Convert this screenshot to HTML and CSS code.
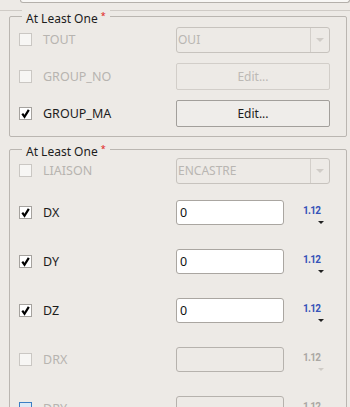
FILE: index.html
```html
<!DOCTYPE html>
<html lang="fr">
<head>
  <meta charset="UTF-8" />
  <title>Mot-clé</title>
  <link rel="stylesheet" href="styles.css">
</head>
<body>

<div class="top">
  <div class="top-field"></div>
</div>

<div class="panel">

  <div class="group group-first">
    <div class="group-head"><span class="group-title">At Least One <span class="req">*</span></span></div>

    <div class="row">
      <span class="check disabled"></span>
      <span class="label disabled">TOUT</span>
      <div class="combo disabled">
        <span class="combo-text">OUI</span>
        <span class="combo-arrow"><span class="tri"></span></span>
      </div>
    </div>

    <div class="row">
      <span class="check disabled"></span>
      <span class="label disabled">GROUP_NO</span>
      <button class="btn" disabled>Edit...</button>
    </div>

    <div class="row">
      <span class="check on"><svg viewBox="0 0 11 11"><path d="M2.3 5.6 L4.5 8.8 L8.8 1.8"/></svg></span>
      <span class="label">GROUP_MA</span>
      <button class="btn">Edit...</button>
    </div>
  </div>

  <div class="group group-second">
    <div class="group-head"><span class="group-title">At Least One <span class="req">*</span></span></div>

    <div class="row row-combo">
      <span class="check disabled"></span>
      <span class="label disabled">LIAISON</span>
      <div class="combo disabled">
        <span class="combo-text">ENCASTRE</span>
        <span class="combo-arrow"><span class="tri"></span></span>
      </div>
    </div>

    <div class="row row-spin">
      <span class="check on"><svg viewBox="0 0 11 11"><path d="M2.3 5.6 L4.5 8.8 L8.8 1.8"/></svg></span>
      <span class="label">DX</span>
      <div class="spin">
        <input class="field" type="text" value="0">
        <span class="ver"><span class="ver-num">1.12</span><span class="ver-tri"></span></span>
      </div>
    </div>

    <div class="row row-spin">
      <span class="check on"><svg viewBox="0 0 11 11"><path d="M2.3 5.6 L4.5 8.8 L8.8 1.8"/></svg></span>
      <span class="label">DY</span>
      <div class="spin">
        <input class="field" type="text" value="0">
        <span class="ver"><span class="ver-num">1.12</span><span class="ver-tri"></span></span>
      </div>
    </div>

    <div class="row row-spin">
      <span class="check on"><svg viewBox="0 0 11 11"><path d="M2.3 5.6 L4.5 8.8 L8.8 1.8"/></svg></span>
      <span class="label">DZ</span>
      <div class="spin">
        <input class="field" type="text" value="0">
        <span class="ver"><span class="ver-num">1.12</span><span class="ver-tri"></span></span>
      </div>
    </div>

    <div class="row row-spin">
      <span class="check disabled"></span>
      <span class="label disabled">DRX</span>
      <div class="spin">
        <input class="field" type="text" value="" disabled>
        <span class="ver off"><span class="ver-num">1.12</span><span class="ver-tri"></span></span>
      </div>
    </div>

    <div class="row row-spin">
      <span class="check focus"></span>
      <span class="label disabled">DRY</span>
      <div class="spin">
        <input class="field" type="text" value="" disabled>
        <span class="ver off"><span class="ver-num">1.12</span><span class="ver-tri"></span></span>
      </div>
    </div>
  </div>

</div>

</body>
</html>
```

FILE: styles.css
```css
body {
  margin: 0;
  background-color: #edeae6;
  font-family: "Noto Sans", sans-serif;
  font-size: 12px;
  color: #1c1c1c;
  overflow: hidden;
}

.top {
  height: 10px;
}

.top-field {
  margin-left: 20px;
  height: 2px;
  background-color: #f8f7f5;
  border: 1px solid #b4b0ab;
  border-top: none;
  border-radius: 0 0 3px 3px;
}

.panel {
  border-top: 1px solid #cfcbc6;
  padding: 0 3px 0 9px;
}

.group {
  border: 1px solid #bab6b1;
  border-radius: 2px;
  padding: 0 16px 9px 9px;
  display: flex;
  flex-direction: column;
  gap: 10px;
}

.group-first {
  margin-top: 5px;
}

.group-second {
  margin-top: 12px;
  gap: 24px;
}

/* title sits on the top border line */
.group-head {
  height: 9px;
  margin-bottom: -10px;
  display: flex;
}

.group-second .group-head {
  height: 8px;
  margin-bottom: -24px;
}

.group-title {
  margin-top: -9px;
  margin-left: 3px;
  padding: 0 4px;
  height: 16px;
  background-color: #edeae6;
  font-size: 12px;
  line-height: 16px;
  color: #1c1c1c;
}

.req {
  color: #e02020;
  font-size: 9px;
  vertical-align: 4px;
}

.row {
  display: flex;
  align-items: center;
  height: 27px;
}

.row-combo {
  height: 25px;
  margin-bottom: -7px;
}

.row-spin {
  height: 25px;
}

.check {
  width: 11px;
  height: 11px;
  border: 1px solid #a5a29e;
  background-color: #fff;
  flex: none;
  display: flex;
  align-items: center;
  justify-content: center;
}

.check svg {
  width: 11px;
  height: 11px;
  fill: none;
  stroke: #000;
  stroke-width: 2.2;
}

.check.disabled {
  border-color: #cac7c3;
  background-color: #f7f6f4;
}

.check.focus {
  border-color: #3b7ec4;
  background-color: #dde9f6;
}

.label {
  margin-left: 11px;
  flex: 1;
  font-size: 12.5px;
}

.label.disabled {
  color: #b7b4b0;
}

.combo {
  width: 152px;
  height: 24px;
  border: 1px solid #c7c3be;
  border-radius: 3px;
  display: flex;
  align-items: center;
  box-sizing: content-box;
}

.combo-text {
  flex: 1;
  padding-left: 1px;
  color: #b9b6b2;
}

.combo-arrow {
  width: 18px;
  height: 100%;
  border-left: 1px solid #d3cfca;
  display: flex;
  align-items: center;
  justify-content: center;
}

.tri {
  width: 0;
  height: 0;
  border-left: 4px solid transparent;
  border-right: 4px solid transparent;
  border-top: 4px solid #d0ccc7;
}

.btn {
  width: 154px;
  height: 27px;
  font-family: "Noto Sans", sans-serif;
  font-size: 12px;
  color: #1c1c1c;
  background-color: #efedea;
  border: 1px solid #a29f9b;
  border-radius: 2px;
  padding: 0;
}

.btn:disabled {
  color: #bcb9b5;
  border-color: #d2cec9;
  background-color: #edeae6;
}

.spin {
  width: 154px;
  display: flex;
  align-items: center;
}

.field {
  width: 108px;
  height: 25px;
  box-sizing: border-box;
  margin: 0;
  border: 1px solid #aaa6a1;
  border-radius: 3px;
  background-color: #fff;
  padding: 0 3px;
  font-family: "Noto Sans", sans-serif;
  font-size: 12.5px;
  color: #111;
}

.field:disabled {
  background-color: #edeae6;
  border-color: #b6b2ad;
}

.ver {
  margin-left: 19px;
  width: 22px;
  height: 25px;
  position: relative;
}

.ver-num {
  position: absolute;
  left: 0;
  top: 5px;
  font-family: "Roboto", sans-serif;
  font-weight: bold;
  font-size: 10px;
  letter-spacing: -0.7px;
  color: #3552b8;
}

.ver-tri {
  position: absolute;
  left: 15px;
  top: 21px;
  width: 0;
  height: 0;
  border-left: 3px solid transparent;
  border-right: 3px solid transparent;
  border-top: 3px solid #222;
}

.ver.off .ver-num {
  color: #aaa7a3;
}

.ver.off .ver-tri {
  border-top-color: #cfcbc6;
}
```
